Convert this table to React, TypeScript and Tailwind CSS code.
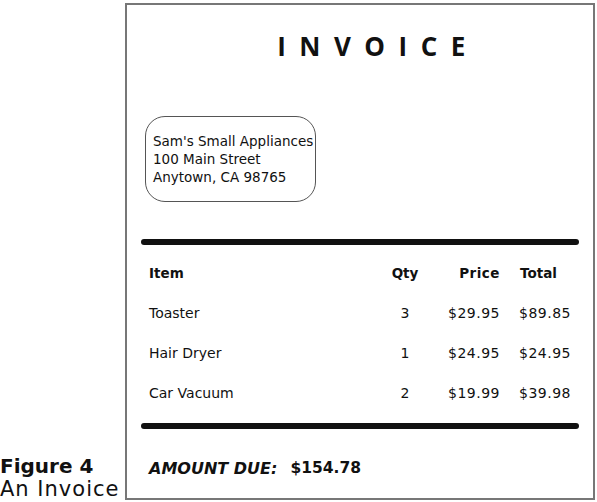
const rows = [
  { item: "Toaster", qty: "3", price: "$29.95", total: "$89.85" },
  { item: "Hair Dryer", qty: "1", price: "$24.95", total: "$24.95" },
  { item: "Car Vacuum", qty: "2", price: "$19.99", total: "$39.98" },
];

export default function App() {
  return (
    <div className="flex h-[502px] w-[597px] bg-white text-[#111] [font-family:'DejaVu_Sans',sans-serif]">
      {/* caption */}
      <div className="flex w-[125px] flex-col justify-end pb-[1px] leading-[23px]">
        <span className="text-[20px] font-bold">Figure 4</span>
        <span className="text-[21px] tracking-[1px]">An Invoice</span>
      </div>

      {/* invoice sheet */}
      <div className="mt-[3px] flex h-[497px] w-[470px] flex-col border-2 border-[#777] px-[14px]">
        <h1 className="mt-[24px] pl-[36px] text-center text-[26px] leading-[34px] font-bold tracking-[13.5px] [font-family:'Open_Sans',sans-serif]">
          INVOICE
        </h1>

        <div className="mt-[53px] ml-[4px] flex h-[86px] w-[171px] flex-col justify-center whitespace-nowrap rounded-[20px] border border-[#555] pl-[7px] text-[13.5px] leading-[18px]">
          <span>Sam's Small Appliances</span>
          <span>100 Main Street</span>
          <span>Anytown, CA 98765</span>
        </div>

        <div className="mt-[37px] h-[6px] rounded-full bg-[#111]" />

        <div className="mt-[18px] grid grid-cols-[1fr_48px_71px_71px] px-[8px] text-[14px]">
          <div className="flex h-[20px] items-center text-[13.5px] font-bold">Item</div>
          <div className="flex h-[20px] items-center justify-center text-[13.5px] font-bold">Qty</div>
          <div className="flex h-[20px] items-center justify-end text-[13.5px] font-bold tracking-[0.5px]">Price</div>
          <div className="flex h-[20px] items-center pl-[20px] text-[13.5px] font-bold">Total</div>
          {rows.map((r) => (
            <div key={r.item} className="contents">
              <div className="mt-[20px] flex h-[20px] items-center">{r.item}</div>
              <div className="mt-[20px] flex h-[20px] items-center justify-center">{r.qty}</div>
              <div className="mt-[20px] flex h-[20px] items-center justify-end tracking-[0.5px]">{r.price}</div>
              <div className="mt-[20px] flex h-[20px] items-center justify-end tracking-[0.5px]">{r.total}</div>
            </div>
          ))}
        </div>

        <div className="mt-[20px] h-[6px] rounded-full bg-[#111]" />

        <div className="mt-[28px] flex items-center gap-[13px] px-[8px] text-[16px] font-bold">
          <span className="italic">AMOUNT DUE:</span>
          <span className="text-[15.5px]">$154.78</span>
        </div>
      </div>
    </div>
  );
}
